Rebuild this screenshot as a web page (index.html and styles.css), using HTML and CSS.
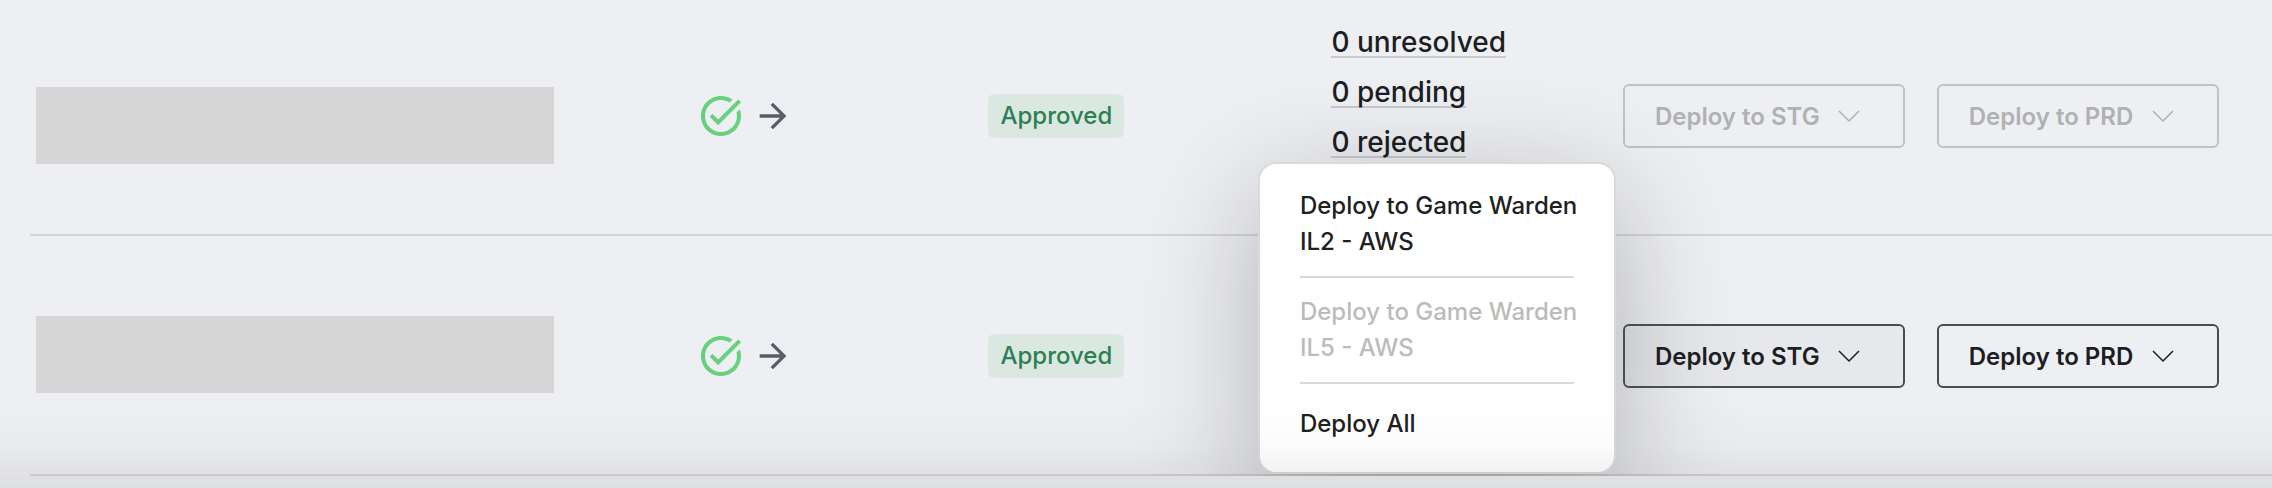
FILE: index.html
```html
<!DOCTYPE html>
<html lang="en">
<head>
    <meta charset="UTF-8">
    <meta name="viewport" content="width=device-width, initial-scale=1.0">
    <title>Deployments</title>
    <link rel="stylesheet" href="styles.css">
</head>
<body>
    <table class="deployments">
        <colgroup>
            <col class="col-name">
            <col class="col-pipeline">
            <col class="col-status">
            <col class="col-findings">
            <col class="col-stg">
            <col class="col-prd">
        </colgroup>
        <tbody>
            <tr class="row-first">
                <td class="name name-low"><div class="placeholder"></div></td>
                <td>
                    <div class="pipeline">
                        <svg class="icon-check" viewBox="0 0 24 24"><path d="M22 5.18L10.59 16.6l-4.24-4.24 1.41-1.41 2.83 2.83 10-10L22 5.18zM19.79 10.22c.13.57.21 1.17.21 1.78 0 4.42-3.58 8-8 8s-8-3.58-8-8 3.58-8 8-8c1.58 0 3.04.46 4.28 1.25l1.44-1.44C16.1 2.67 14.13 2 12 2 6.48 2 2 6.48 2 12s4.48 10 10 10 10-4.48 10-10c0-1.19-.22-2.33-.6-3.39l-1.61 1.61z"/></svg>
                        <svg class="icon-arrow" viewBox="0 0 24 24"><path d="M12 4l-1.41 1.41L16.17 11H4v2h12.17l-5.58 5.59L12 20l8-8z"/></svg>
                    </div>
                </td>
                <td><span class="badge">Approved</span></td>
                <td class="findings-cell">
                    <ul class="findings">
                        <li><a href="#">0 unresolved</a></li>
                        <li><a href="#">0 pending</a></li>
                        <li><a href="#">0 rejected</a></li>
                    </ul>
                </td>
                <td>
                    <button type="button" class="deploy-btn" disabled>Deploy to STG
                        <svg class="chevron" viewBox="0 0 24 24"><path d="M2 7l10 10L22 7"/></svg>
                    </button>
                </td>
                <td>
                    <button type="button" class="deploy-btn" disabled>Deploy to PRD
                        <svg class="chevron" viewBox="0 0 24 24"><path d="M2 7l10 10L22 7"/></svg>
                    </button>
                </td>
            </tr>
            <tr>
                <td class="name"><div class="placeholder"></div></td>
                <td>
                    <div class="pipeline">
                        <svg class="icon-check" viewBox="0 0 24 24"><path d="M22 5.18L10.59 16.6l-4.24-4.24 1.41-1.41 2.83 2.83 10-10L22 5.18zM19.79 10.22c.13.57.21 1.17.21 1.78 0 4.42-3.58 8-8 8s-8-3.58-8-8 3.58-8 8-8c1.58 0 3.04.46 4.28 1.25l1.44-1.44C16.1 2.67 14.13 2 12 2 6.48 2 2 6.48 2 12s4.48 10 10 10 10-4.48 10-10c0-1.19-.22-2.33-.6-3.39l-1.61 1.61z"/></svg>
                        <svg class="icon-arrow" viewBox="0 0 24 24"><path d="M12 4l-1.41 1.41L16.17 11H4v2h12.17l-5.58 5.59L12 20l8-8z"/></svg>
                    </div>
                </td>
                <td><span class="badge">Approved</span></td>
                <td></td>
                <td>
                    <div class="dropdown">
                        <button type="button" class="deploy-btn open" aria-expanded="true">Deploy to STG
                            <svg class="chevron" viewBox="0 0 24 24"><path d="M2 7l10 10L22 7"/></svg>
                        </button>
                        <!-- Deploy menu, opens to the left of the button -->
                        <div class="menu">
                            <button type="button" class="menu-item">Deploy to Game Warden<br>IL2 - AWS</button>
                            <button type="button" class="menu-item" disabled>Deploy to Game Warden<br>IL5 - AWS</button>
                            <button type="button" class="menu-item menu-all">Deploy All</button>
                        </div>
                    </div>
                </td>
                <td>
                    <button type="button" class="deploy-btn">Deploy to PRD
                        <svg class="chevron" viewBox="0 0 24 24"><path d="M2 7l10 10L22 7"/></svg>
                    </button>
                </td>
            </tr>
        </tbody>
    </table>
    <div class="bottom-fade"></div>
</body>
</html>
```

FILE: styles.css
```css
body {
    margin: 0;
    padding-left: 30px;
    background-color: #eeeff3;
    color: #1c1e23;
    font-family: Inter, "Liberation Sans", sans-serif;
    font-size: 24px;
    font-weight: 500;
    overflow: hidden;
}

.deployments {
    width: 100%;
    table-layout: fixed;
    border-collapse: separate;
    border-spacing: 0;
}

.col-name { width: 29.75%; }
.col-pipeline { width: 13%; }
.col-status { width: 15.3%; }
.col-findings { width: 13%; }
.col-stg { width: 14%; }

.deployments td {
    box-sizing: border-box;
    height: 240px;
    padding: 2px 0 0;
    border-bottom: 2px solid #d3d5d6;
    vertical-align: middle;
}

.deployments .row-first td {
    height: 236px;
    padding-top: 0;
    padding-bottom: 2px;
}

.deployments .name {
    padding: 0 0 2px 6px;
}

.deployments .row-first .name-low {
    padding-top: 18px;
}

.placeholder {
    width: 518px;
    max-width: 90%;
    height: 77px;
    background-color: #d6d6d6;
}

.pipeline {
    display: flex;
    align-items: center;
    gap: 8px;
}

.icon-check {
    width: 48px;
    height: 48px;
    fill: #66d17f;
}

.icon-arrow {
    width: 40px;
    height: 40px;
    fill: #5b5c68;
}

.badge {
    display: inline-block;
    padding: 0 12px;
    border-radius: 6px;
    background-color: #dbe8e1;
    color: #2e8052;
    line-height: 44px;
    vertical-align: middle;
}

/* Findings links */
.deployments .findings-cell {
    vertical-align: top;
}

.findings {
    display: flex;
    flex-direction: column;
    align-items: flex-start;
    gap: 20px;
    margin: 0;
    padding: 28px 0 0;
    list-style: none;
    font-size: 28px;
    line-height: 28px;
}

.findings a {
    display: block;
    border-bottom: 2px solid #c9cacd;
    color: inherit;
    text-decoration: none;
}

/* Buttons */
button {
    font: inherit;
    color: inherit;
    cursor: pointer;
}

.deploy-btn {
    display: flex;
    align-items: center;
    justify-content: space-between;
    box-sizing: border-box;
    width: 282px;
    height: 64px;
    padding: 0 42px 0 30px;
    border: 2px solid #474d52;
    border-radius: 6px;
    background-color: transparent;
    font-weight: 600;
    white-space: nowrap;
}

.deploy-btn.open {
    background-color: rgba(20, 20, 40, 0.03);
}

.deploy-btn:disabled {
    border-color: #c1c3c3;
    color: #b0b1b2;
    cursor: default;
}

.chevron {
    width: 24px;
    height: 24px;
    fill: none;
    stroke: currentColor;
    stroke-width: 1.5;
}

/* Dropdown menu */
.dropdown {
    position: relative;
}

.menu {
    position: absolute;
    right: 100%;
    bottom: -86px;
    z-index: 1;
    width: 274px;
    margin-right: 7px;
    padding: 8px 40px;
    border: 2px solid #d9dbdb;
    border-radius: 18px;
    background-color: #fff;
    box-shadow: 0 30px 120px rgba(0, 0, 0, 0.26);
}

.dropdown .deploy-btn {
    position: relative;
    z-index: 2;
}

.menu-item {
    display: block;
    width: 100%;
    padding: 16px 0;
    border: 0;
    border-bottom: 2px solid #d9d9d9;
    background: none;
    color: #20211d;
    line-height: 36px;
    text-align: left;
    white-space: nowrap;
}

.menu-item:disabled {
    color: #bbbcba;
    cursor: default;
}

.menu-all {
    padding: 22px 0;
    border-bottom: 0;
}

/* Soft shade along the bottom edge of the window */
.bottom-fade {
    position: fixed;
    right: 0;
    bottom: 0;
    left: 0;
    z-index: 3;
    height: 88px;
    background: linear-gradient(rgba(0, 0, 0, 0), rgba(0, 0, 0, 0.015) 50%, rgba(0, 0, 0, 0.07));
    pointer-events: none;
}
```
